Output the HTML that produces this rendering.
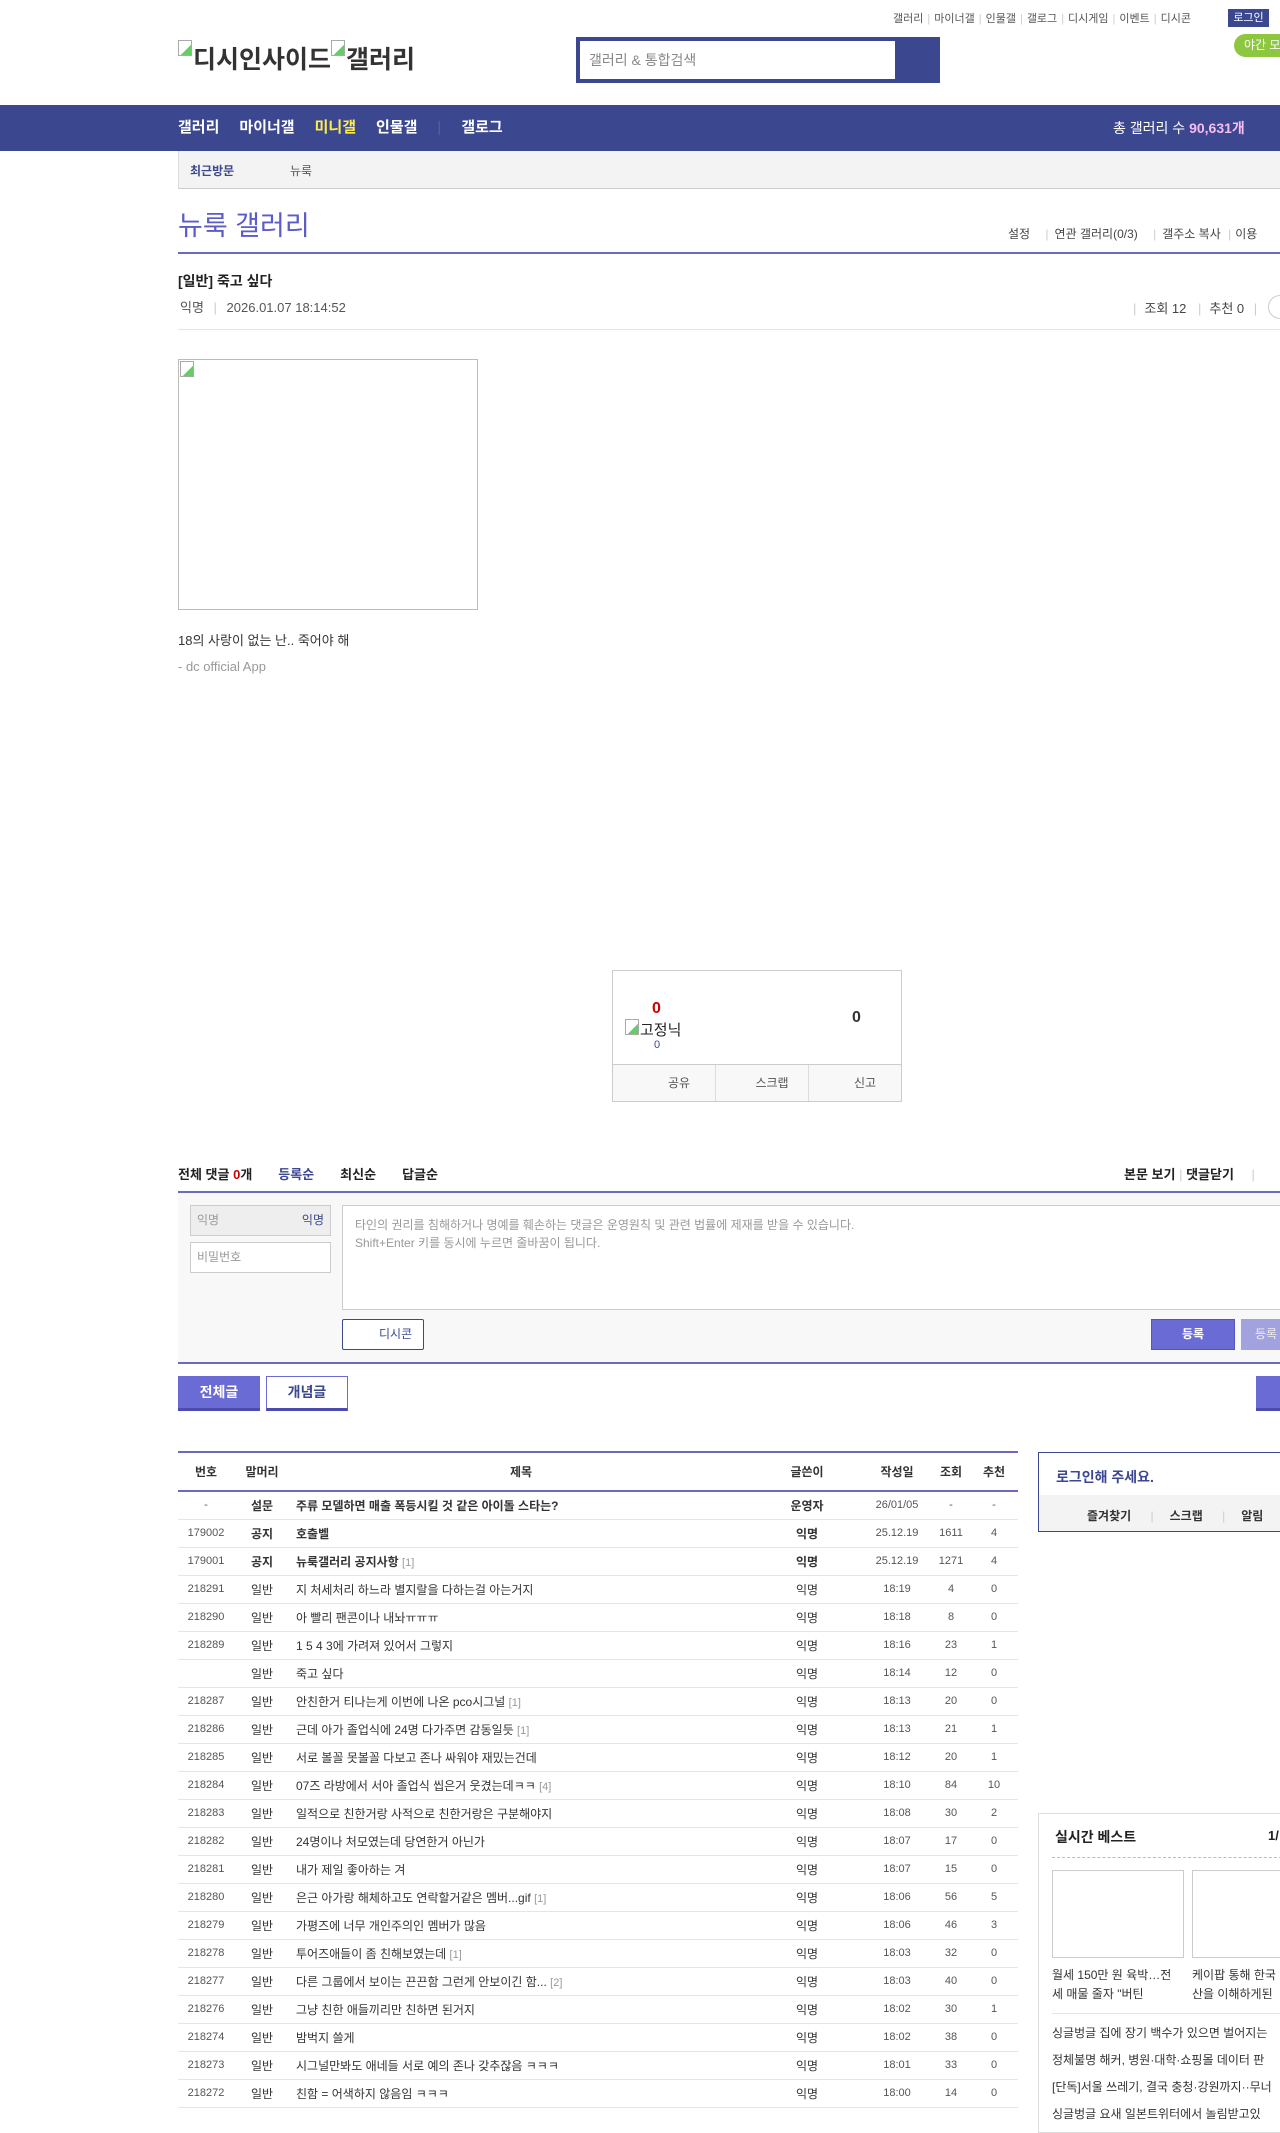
<!DOCTYPE html>
<html><head><meta charset="utf-8">
<style>
*{margin:0;padding:0;box-sizing:border-box}
body{width:1280px;height:2114px;overflow:hidden;position:relative;background:#fff;font-family:"Liberation Sans","Noto Sans CJK KR",sans-serif;color:#333;font-size:12px}
.a{position:absolute;white-space:nowrap}
.topl{top:10px;left:893px;font-size:11px;color:#555}
.topl i{color:#ccc;font-style:normal;margin:0 4px}
.navy{background:#3b4890}
table{border-collapse:collapse}
.lst{position:absolute;left:178px;top:1451px;width:840px;font-size:12px}
.lst th{height:39px;font-weight:bold;color:#333;border-top:2px solid #6d69bd;border-bottom:2px solid #6d69bd}
.lst td{height:28px;border-bottom:1px solid #e5e5e5;text-align:center;color:#333}
.lst td.t{text-align:left;padding-left:6px}
.lst tr.b td{font-weight:bold}
.lst td.n{font-size:11px;color:#555}
.r{color:#999;font-size:11px}
.bi{display:inline-block;width:14px;height:16px;border:1px solid #aaa;vertical-align:top;margin-right:1px;background:linear-gradient(135deg,#fff 60%,#6c6 60%)}
</style></head><body>
<div class="a topl">갤러리<i>|</i>마이너갤<i>|</i>인물갤<i>|</i>갤로그<i>|</i>디시게임<i>|</i>이벤트<i>|</i>디시콘</div>
<div class="a navy" style="left:1228px;top:9px;width:41px;height:18px;color:#fff;font-size:11px;line-height:18px;text-align:center">로그인</div>
<div class="a" style="left:1234px;top:34px;width:60px;height:23px;background:#8dc63f;border-radius:12px;color:#fff;font-size:12px;line-height:23px;padding-left:10px">야간 모드</div>
<div class="a" style="left:178px;top:40px;font-size:25px;font-weight:bold;color:#333"><span class="bi"></span>디시인사이드<span class="bi"></span>갤러리</div>
<div class="a navy" style="left:576px;top:37px;width:364px;height:46px"></div>
<div class="a" style="left:580px;top:41px;width:315px;height:38px;background:#fff;color:#888;font-size:14px;line-height:38px;padding-left:9px">갤러리 &amp; 통합검색</div>
<div class="a navy" style="left:0;top:105px;width:1280px;height:46px"></div>
<div class="a" style="left:178px;top:105px;line-height:46px;font-size:15px;font-weight:bold;color:#fff">갤러리<span style="margin-left:20px">마이너갤</span><span style="margin-left:20px;color:#ffed45">미니갤</span><span style="margin-left:20px">인물갤</span><span style="margin:0 20px;color:#5560a0;font-weight:normal">|</span>갤로그</div>
<div class="a" style="left:1113px;top:105px;line-height:46px;font-size:14px;color:#fff">총 갤러리 수 <b style="color:#f9bcf5">90,631개</b></div>
<div class="a" style="left:178px;top:151px;width:1102px;height:38px;background:#f3f3f3;border-bottom:1px solid #ccc;border-left:1px solid #ddd"></div>
<div class="a" style="left:190px;top:162px;font-size:12px;font-weight:bold;color:#3b4890">최근방문</div>
<div class="a" style="left:290px;top:162px;font-size:12px;color:#555">뉴룩</div>
<div class="a" style="left:178px;top:204px;font-size:27px;color:#5b5bc9">뉴룩 갤러리</div>
<div class="a" style="left:1008px;top:225px;font-size:12px;color:#444">설정 <span style="color:#ccc;margin:0 6px 0 12px">|</span>연관 갤러리(0/3) <span style="color:#ccc;margin:0 6px 0 12px">|</span>갤주소 복사 <span style="color:#ccc;margin:0 4px">|</span>이용</div>
<div class="a" style="left:178px;top:252px;width:1102px;height:2px;background:#6d69bd"></div>
<div class="a" style="left:178px;top:271px;font-size:14px;font-weight:bold;color:#222">[일반] 죽고 싶다</div>
<div class="a" style="left:180px;top:297px;font-size:13px;color:#555">익명 <span style="color:#ccc;margin:0 6px">|</span> 2026.01.07 18:14:52</div>
<div class="a" style="left:1133px;top:298px;font-size:13px;color:#444"><span style="color:#ccc;margin-right:8px">|</span>조회 12 <span style="color:#ccc;margin:0 8px">|</span>추천 0 <span style="color:#ccc;margin:0 6px">|</span></div>
<div class="a" style="left:1268px;top:295px;width:24px;height:24px;border:1px solid #ccc;border-radius:12px"></div>
<div class="a" style="left:178px;top:329px;width:1102px;height:1px;background:#e5e5e5"></div>
<div class="a" style="left:178px;top:359px;width:300px;height:251px;border:1px solid #bbb"><span class="bi" style="margin:1px"></span></div>
<div class="a" style="left:178px;top:630px;font-size:13px;color:#333">18의 사랑이 없는 난.. 죽어야 해</div>
<div class="a" style="left:178px;top:659px;font-size:13px;color:#999">- dc official App</div>
<div class="a" style="left:612px;top:970px;width:290px;height:132px;border:1px solid #ccc"></div>
<div class="a" style="left:612px;top:1064px;width:290px;height:38px;border:1px solid #ccc;background:#f8f8f8;display:flex;font-size:12px;color:#555">
<div style="flex:1;border-right:1px solid #ddd;text-align:center;line-height:36px;padding-left:30px">공유</div>
<div style="flex:1;border-right:1px solid #ddd;text-align:center;line-height:36px;padding-left:20px">스크랩</div>
<div style="flex:1;text-align:center;line-height:36px;padding-left:20px">신고</div></div>
<div class="a" style="left:652px;top:1000px;font-size:16px;font-weight:bold;color:#c00">0</div>
<div class="a" style="left:625px;top:1019px;font-size:15px;color:#222"><span class="bi"></span>고정닉</div>
<div class="a" style="left:654px;top:1039px;font-size:11px;color:#3b4890">0</div>
<div class="a" style="left:852px;top:1009px;font-size:16px;font-weight:bold;color:#333">0</div>
<div class="a" style="left:178px;top:1164px;font-size:13px;font-weight:bold;color:#222">전체 댓글 <span style="color:#c00">0</span>개<span style="color:#3b4890;margin-left:26px">등록순</span><span style="margin-left:26px">최신순</span><span style="margin-left:26px">답글순</span></div>
<div class="a" style="left:1124px;top:1164px;font-size:13px;font-weight:bold;color:#222">본문 보기 <span style="color:#ccc;font-weight:normal">|</span> 댓글닫기 <span style="color:#ccc;font-weight:normal;margin-left:14px">|</span></div>
<div class="a" style="left:178px;top:1191px;width:1102px;height:2px;background:#6d69bd"></div>
<div class="a" style="left:178px;top:1193px;width:1102px;height:169px;background:#f8f8f8"></div>
<div class="a" style="left:190px;top:1205px;width:141px;height:31px;background:#eee;border:1px solid #ccc;font-size:12px;color:#999;line-height:29px;padding:0 6px">익명<span style="float:right;color:#3b4890">익명</span></div>
<div class="a" style="left:190px;top:1242px;width:141px;height:31px;background:#fff;border:1px solid #ccc;font-size:12px;color:#999;line-height:29px;padding:0 6px">비밀번호</div>
<div class="a" style="left:342px;top:1205px;width:950px;height:105px;background:#fff;border:1px solid #ccc;font-size:12px;color:#999;padding:10px 12px;line-height:18px">타인의 권리를 침해하거나 명예를 훼손하는 댓글은 운영원칙 및 관련 법률에 제재를 받을 수 있습니다.<br>Shift+Enter 키를 동시에 누르면 줄바꿈이 됩니다.</div>
<div class="a" style="left:342px;top:1319px;width:82px;height:31px;background:#fff;border:1px solid #3b4890;border-radius:2px;font-size:12px;color:#3b4890;line-height:29px;padding-left:36px">디시콘</div>
<div class="a" style="left:1151px;top:1319px;width:84px;height:31px;background:#6b6bd6;border:1px solid #5555c0;color:#fff;font-size:12px;font-weight:bold;line-height:29px;text-align:center">등록</div>
<div class="a" style="left:1241px;top:1319px;width:84px;height:31px;background:#a2a2df;color:#eee;font-size:12px;line-height:31px;padding-left:14px">등록</div>
<div class="a" style="left:178px;top:1362px;width:1102px;height:2px;background:#6d69bd"></div>
<div class="a" style="left:178px;top:1376px;width:82px;height:35px;background:#6b6bd6;border-bottom:3px solid #4b4bb0;color:#fff;font-size:14px;font-weight:bold;line-height:33px;text-align:center">전체글</div>
<div class="a" style="left:266px;top:1376px;width:82px;height:35px;background:#fff;border:1px solid #6b6bd6;border-bottom:3px solid #4b4bb0;color:#3b4890;font-size:14px;font-weight:bold;line-height:31px;text-align:center">개념글</div>
<div class="a" style="left:1256px;top:1376px;width:40px;height:35px;background:#6b6bd6;border-bottom:3px solid #4b4bb0"></div>

<table class="lst">
<tr><th style="width:56px">번호</th><th style="width:56px">말머리</th><th>제목</th><th style="width:110px">글쓴이</th><th style="width:70px">작성일</th><th style="width:38px">조회</th><th style="width:48px">추천</th></tr>
<tr class="b"><td class="n" style="font-weight:normal">-</td><td>설문</td><td class="t">주류 모델하면 매출 폭등시킬 것 같은 아이돌 스타는?</td><td>운영자</td><td class="n" style="font-weight:normal">26/01/05</td><td class="n" style="font-weight:normal">-</td><td class="n" style="font-weight:normal">-</td></tr>
<tr class="b"><td class="n" style="font-weight:normal">179002</td><td>공지</td><td class="t">호출벨</td><td>익명</td><td class="n" style="font-weight:normal">25.12.19</td><td class="n" style="font-weight:normal">1611</td><td class="n" style="font-weight:normal">4</td></tr>
<tr class="b"><td class="n" style="font-weight:normal">179001</td><td>공지</td><td class="t">뉴룩갤러리 공지사항 <span class="r" style="font-weight:normal">[1]</span></td><td>익명</td><td class="n" style="font-weight:normal">25.12.19</td><td class="n" style="font-weight:normal">1271</td><td class="n" style="font-weight:normal">4</td></tr>
<tr><td class="n">218291</td><td>일반</td><td class="t">지 처세처리 하느라 별지랄을 다하는걸 아는거지</td><td>익명</td><td class="n">18:19</td><td class="n">4</td><td class="n">0</td></tr>
<tr><td class="n">218290</td><td>일반</td><td class="t">아 빨리 팬콘이나 내놔ㅠㅠㅠ</td><td>익명</td><td class="n">18:18</td><td class="n">8</td><td class="n">0</td></tr>
<tr><td class="n">218289</td><td>일반</td><td class="t">1 5 4 3에 가려져 있어서 그렇지</td><td>익명</td><td class="n">18:16</td><td class="n">23</td><td class="n">1</td></tr>
<tr><td class="n"></td><td>일반</td><td class="t">죽고 싶다</td><td>익명</td><td class="n">18:14</td><td class="n">12</td><td class="n">0</td></tr>
<tr><td class="n">218287</td><td>일반</td><td class="t">안친한거 티나는게 이번에 나온 pco시그널 <span class="r">[1]</span></td><td>익명</td><td class="n">18:13</td><td class="n">20</td><td class="n">0</td></tr>
<tr><td class="n">218286</td><td>일반</td><td class="t">근데 아가 졸업식에 24명 다가주면 감동일듯 <span class="r">[1]</span></td><td>익명</td><td class="n">18:13</td><td class="n">21</td><td class="n">1</td></tr>
<tr><td class="n">218285</td><td>일반</td><td class="t">서로 볼꼴 못볼꼴 다보고 존나 싸워야 재밌는건데</td><td>익명</td><td class="n">18:12</td><td class="n">20</td><td class="n">1</td></tr>
<tr><td class="n">218284</td><td>일반</td><td class="t">07즈 라방에서 서아 졸업식 씹은거 웃겼는데ㅋㅋ <span class="r">[4]</span></td><td>익명</td><td class="n">18:10</td><td class="n">84</td><td class="n">10</td></tr>
<tr><td class="n">218283</td><td>일반</td><td class="t">일적으로 친한거랑 사적으로 친한거랑은 구분해야지</td><td>익명</td><td class="n">18:08</td><td class="n">30</td><td class="n">2</td></tr>
<tr><td class="n">218282</td><td>일반</td><td class="t">24명이나 처모였는데 당연한거 아닌가</td><td>익명</td><td class="n">18:07</td><td class="n">17</td><td class="n">0</td></tr>
<tr><td class="n">218281</td><td>일반</td><td class="t">내가 제일 좋아하는 겨</td><td>익명</td><td class="n">18:07</td><td class="n">15</td><td class="n">0</td></tr>
<tr><td class="n">218280</td><td>일반</td><td class="t">은근 아가랑 해체하고도 연락할거같은 멤버...gif <span class="r">[1]</span></td><td>익명</td><td class="n">18:06</td><td class="n">56</td><td class="n">5</td></tr>
<tr><td class="n">218279</td><td>일반</td><td class="t">가평즈에 너무 개인주의인 멤버가 많음</td><td>익명</td><td class="n">18:06</td><td class="n">46</td><td class="n">3</td></tr>
<tr><td class="n">218278</td><td>일반</td><td class="t">투어즈애들이 좀 친해보였는데 <span class="r">[1]</span></td><td>익명</td><td class="n">18:03</td><td class="n">32</td><td class="n">0</td></tr>
<tr><td class="n">218277</td><td>일반</td><td class="t">다른 그룹에서 보이는 끈끈함 그런게 안보이긴 함... <span class="r">[2]</span></td><td>익명</td><td class="n">18:03</td><td class="n">40</td><td class="n">0</td></tr>
<tr><td class="n">218276</td><td>일반</td><td class="t">그냥 친한 애들끼리만 친하면 된거지</td><td>익명</td><td class="n">18:02</td><td class="n">30</td><td class="n">1</td></tr>
<tr><td class="n">218274</td><td>일반</td><td class="t">밤벅지 쓸게</td><td>익명</td><td class="n">18:02</td><td class="n">38</td><td class="n">0</td></tr>
<tr><td class="n">218273</td><td>일반</td><td class="t">시그널만봐도 애네들 서로 예의 존나 갖추잖음 ㅋㅋㅋ</td><td>익명</td><td class="n">18:01</td><td class="n">33</td><td class="n">0</td></tr>
<tr><td class="n">218272</td><td>일반</td><td class="t">친함 = 어색하지 않음임 ㅋㅋㅋ</td><td>익명</td><td class="n">18:00</td><td class="n">14</td><td class="n">0</td></tr>
</table>

<div class="a" style="left:1038px;top:1452px;width:260px;height:80px;border:1px solid #3b4890"></div>
<div class="a" style="left:1039px;top:1495px;width:260px;height:36px;background:#f3f3f3"></div>
<div class="a" style="left:1056px;top:1467px;font-size:14px;font-weight:bold;color:#3b4890">로그인해 주세요.</div>
<div class="a" style="left:1087px;top:1507px;font-size:12px;font-weight:bold;color:#333">즐겨찾기 <span style="color:#ccc;font-weight:normal;margin:0 16px">|</span>스크랩 <span style="color:#ccc;font-weight:normal;margin:0 16px">|</span>알림</div>

<div class="a" style="left:1038px;top:1813px;width:260px;height:320px;border:1px solid #ddd"></div>
<div class="a" style="left:1055px;top:1827px;font-size:14px;font-weight:bold;color:#222">실시간 베스트</div>
<div class="a" style="left:1268px;top:1828px;font-size:13px;font-weight:bold;color:#222">1/</div>
<div class="a" style="left:1052px;top:1857px;width:240px;border-top:1px dashed #bbb"></div>
<div class="a" style="left:1052px;top:1870px;width:132px;height:88px;border:1px solid #ccc"></div>
<div class="a" style="left:1192px;top:1870px;width:132px;height:88px;border:1px solid #ccc"></div>
<div class="a" style="left:1052px;top:1966px;font-size:12px;color:#333;line-height:19px">월세 150만 원 육박…전<br>세 매물 줄자 "버틴</div>
<div class="a" style="left:1192px;top:1966px;font-size:12px;color:#333;line-height:19px">케이팝 통해 한국<br>산을 이해하게된</div>
<div class="a" style="left:1052px;top:2013px;width:240px;height:1px;background:#e5e5e5"></div>
<div class="a" style="left:1052px;top:2020px;font-size:12px;color:#333;line-height:27px">싱글벙글 집에 장기 백수가 있으면 벌어지는<br>정체불명 해커, 병원·대학·쇼핑몰 데이터 판<br>[단독]서울 쓰레기, 결국 충청·강원까지··무너<br>싱글벙글 요새 일본트위터에서 놀림받고있</div>
</body></html>
